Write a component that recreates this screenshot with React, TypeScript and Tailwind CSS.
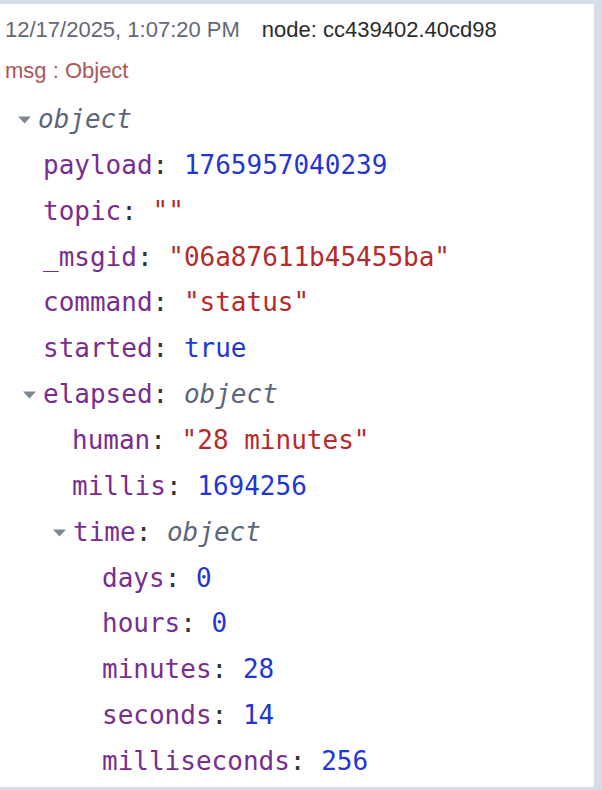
import React from "react";

type Row = {
  pad: string;
  caret?: boolean;
  keyName?: string;
  value: string;
  kind: "num" | "str" | "bool" | "meta";
};

const rows: Row[] = [
  { pad: "pl-[18px]", caret: true, value: "object", kind: "meta" },
  { pad: "pl-[43px]", keyName: "payload", value: "1765957040239", kind: "num" },
  { pad: "pl-[43px]", keyName: "topic", value: '""', kind: "str" },
  { pad: "pl-[43px]", keyName: "_msgid", value: '"06a87611b45455ba"', kind: "str" },
  { pad: "pl-[43px]", keyName: "command", value: '"status"', kind: "str" },
  { pad: "pl-[43px]", keyName: "started", value: "true", kind: "bool" },
  { pad: "pl-[23px]", caret: true, keyName: "elapsed", value: "object", kind: "meta" },
  { pad: "pl-[72px]", keyName: "human", value: '"28 minutes"', kind: "str" },
  { pad: "pl-[72px]", keyName: "millis", value: "1694256", kind: "num" },
  { pad: "pl-[53px]", caret: true, keyName: "time", value: "object", kind: "meta" },
  { pad: "pl-[102px]", keyName: "days", value: "0", kind: "num" },
  { pad: "pl-[102px]", keyName: "hours", value: "0", kind: "num" },
  { pad: "pl-[102px]", keyName: "minutes", value: "28", kind: "num" },
  { pad: "pl-[102px]", keyName: "seconds", value: "14", kind: "num" },
  { pad: "pl-[102px]", keyName: "milliseconds", value: "256", kind: "num" },
];

const valueClass = {
  num: "text-[#2236d6]",
  bool: "text-[#2236d6]",
  str: "text-[#b52a2a]",
  meta: "text-[#5d6679] italic",
};

const Caret = () => (
  <span className="inline-flex w-[20px] shrink-0 items-center">
    <svg width="13" height="8" viewBox="0 0 13 8">
      <path d="M0 0.5 L13 0.5 L6.5 7.5 Z" fill="#7f8794" />
    </svg>
  </span>
);

export default function App() {
  return (
    <div className="w-[602px] h-[790px] bg-[#d7dcea] pt-[4px] pr-[8px] pb-[3px] overflow-hidden">
      <div className="h-full bg-white">
        <div className="pt-[14px] pl-[5px] flex gap-[22px] text-[22px] leading-[24px] font-['Liberation_Sans',Arial,sans-serif]">
          <span className="text-[#636875]">12/17/2025, 1:07:20 PM</span>
          <span className="text-[#2b2b2b]">node: cc439402.40cd98</span>
        </div>
        <div className="mt-[17px] pl-[5px] text-[22px] leading-[24px] text-[#ad5555] font-['Liberation_Sans',Arial,sans-serif]">
          msg : Object
        </div>
        <div className="mt-[14px] text-[26px] leading-[45.86px] font-['DejaVu_Sans_Mono',monospace] whitespace-pre">
          {rows.map((r, i) => (
            <div key={i} className={`flex items-center ${r.pad}`}>
              {r.caret && <Caret />}
              {r.keyName && (
                <>
                  <span className="text-[#792d8e]">{r.keyName}</span>
                  <span className="text-[#333333]">: </span>
                </>
              )}
              <span className={valueClass[r.kind]}>{r.value}</span>
            </div>
          ))}
        </div>
      </div>
    </div>
  );
}
